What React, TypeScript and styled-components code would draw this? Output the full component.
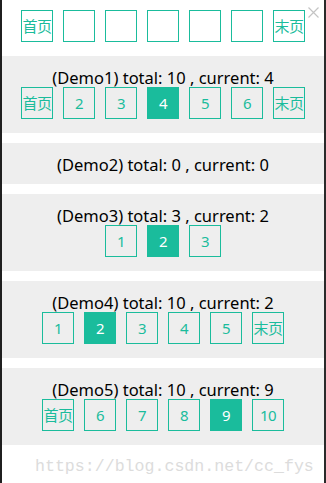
import React from 'react';
import styled, { createGlobalStyle } from 'styled-components';

const GlobalStyle = createGlobalStyle`
  html, body {
    margin: 0;
    padding: 0;
    background: #fff;
  }
  body {
    font-family: 'Noto Sans', 'Noto Sans CJK SC', sans-serif;
    color: #000;
  }
`;

const TEAL = '#1abc9c';

type Item = { label: string; active?: boolean };

const demos: { title: string; items: Item[] }[] = [
  {
    title: '(Demo1) total: 10 , current: 4',
    items: [
      { label: '首页' },
      { label: '2' },
      { label: '3' },
      { label: '4', active: true },
      { label: '5' },
      { label: '6' },
      { label: '末页' },
    ],
  },
  { title: '(Demo2) total: 0 , current: 0', items: [] },
  {
    title: '(Demo3) total: 3 , current: 2',
    items: [{ label: '1' }, { label: '2', active: true }, { label: '3' }],
  },
  {
    title: '(Demo4) total: 10 , current: 2',
    items: [
      { label: '1' },
      { label: '2', active: true },
      { label: '3' },
      { label: '4' },
      { label: '5' },
      { label: '末页' },
    ],
  },
  {
    title: '(Demo5) total: 10 , current: 9',
    items: [
      { label: '首页' },
      { label: '6' },
      { label: '7' },
      { label: '8' },
      { label: '9', active: true },
      { label: '10' },
    ],
  },
];

const topRow: Item[] = [
  { label: '首页' },
  { label: '' },
  { label: '' },
  { label: '' },
  { label: '' },
  { label: '' },
  { label: '末页' },
];

const Pager = ({ items }: { items: Item[] }) => (
  <PagerRow>
    {items.map((it, i) => (
      <PageButton key={i} $active={it.active}>
        {it.label}
      </PageButton>
    ))}
  </PagerRow>
);

export default function App() {
  return (
    <Frame>
      <GlobalStyle />
      <Close>
        <svg width="11" height="11" viewBox="0 0 11 11">
          <path d="M0.5 0.5 L10.5 10.5 M10.5 0.5 L0.5 10.5" stroke="#c4c4c4" strokeWidth="1.2" fill="none" />
        </svg>
      </Close>

      <TopPager>
        <Pager items={topRow} />
      </TopPager>

      {demos.map((d) => (
        <Band key={d.title}>
          <Title>{d.title}</Title>
          {d.items.length > 0 && (
            <BandPager>
              <Pager items={d.items} />
            </BandPager>
          )}
        </Band>
      ))}

      <Watermark>https://blog.csdn.net/cc_fys</Watermark>
    </Frame>
  );
}

const Frame = styled.div`
  position: relative;
  box-sizing: border-box;
  width: 326px;
  height: 483px;
  border-left: 2px solid #1f1f1f;
  border-right: 2px solid #2a2a2a;
  overflow: hidden;
`;

const Close = styled.div`
  position: absolute;
  top: 7px;
  right: 5px;
  width: 11px;
  height: 11px;
  line-height: 0;
`;

const TopPager = styled.div`
  padding: 10px 0 14px;
`;

const Band = styled.section`
  background: #eeeeee;
  padding: 12px 0 10px;
  margin-bottom: 10px;
  text-align: center;
`;

const BandPager = styled.div`
  margin-bottom: 4px;
`;

const Title = styled.div`
  font-size: 16.5px;
  line-height: 19px;
  height: 19px;
  white-space: nowrap;
`;

const PagerRow = styled.div`
  display: flex;
  justify-content: center;
  gap: 10px;
`;

const PageButton = styled.div<{ $active?: boolean }>`
  box-sizing: border-box;
  width: 32px;
  height: 32px;
  border: 1px solid ${TEAL};
  background: ${(p) => (p.$active ? TEAL : 'transparent')};
  color: ${(p) => (p.$active ? '#fff' : TEAL)};
  font-family: 'Noto Sans', 'Noto Sans CJK SC', sans-serif;
  font-size: 15px;
  line-height: 30px;
  text-align: center;
  white-space: nowrap;
  letter-spacing: -0.5px;
`;

const Watermark = styled.div`
  padding: 0 0 0 33px;
  font-family: 'Liberation Mono', monospace;
  font-size: 16.6px;
  line-height: 24px;
  color: #dcdcdc;
  white-space: nowrap;
`;
